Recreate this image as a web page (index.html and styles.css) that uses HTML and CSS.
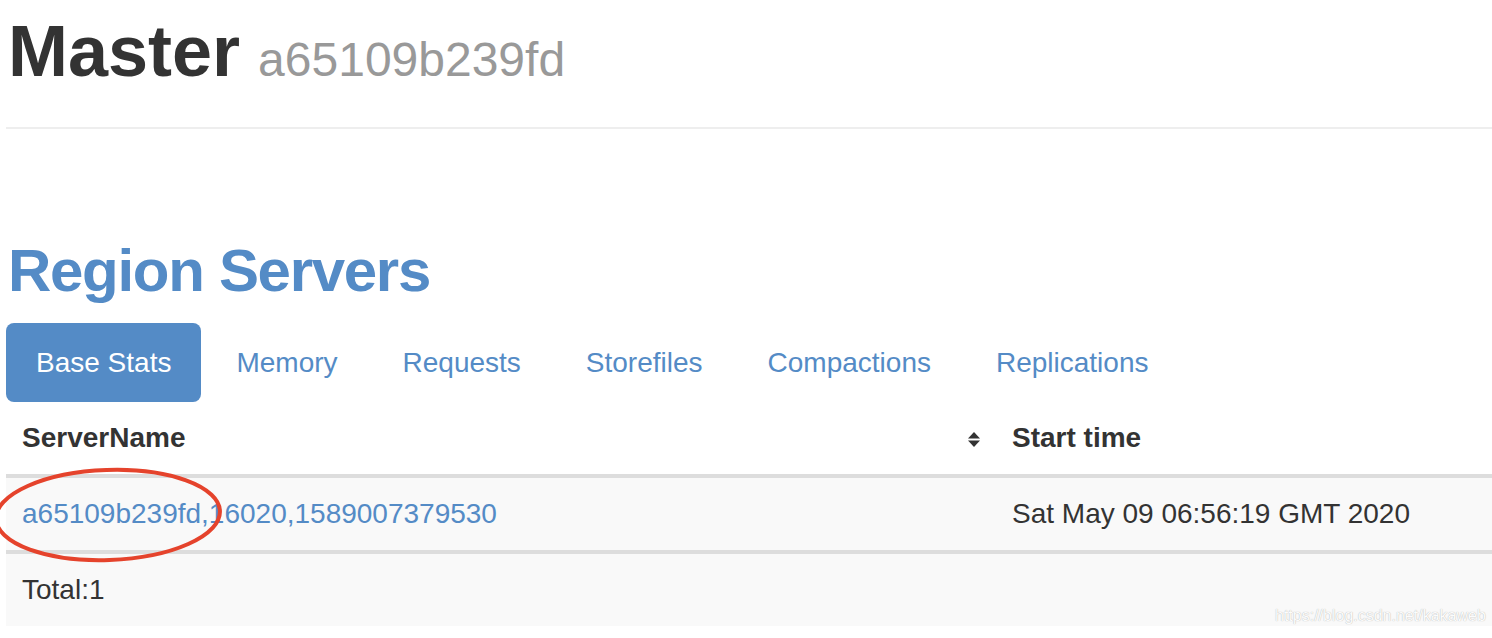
FILE: index.html
```html
<!DOCTYPE html>
<html>
<head>
<meta charset="utf-8">
<link rel="stylesheet" href="styles.css">
</head>
<body>
<div class="container">
  <div class="page-header">
    <h1>Master <small>a65109b239fd</small></h1>
  </div>
  <h2 class="section-title">Region Servers</h2>
  <ul class="nav-pills">
    <li class="active"><a>Base Stats</a></li>
    <li><a>Memory</a></li>
    <li><a>Requests</a></li>
    <li><a>Storefiles</a></li>
    <li><a>Compactions</a></li>
    <li><a>Replications</a></li>
  </ul>
  <table class="table">
    <thead>
      <tr>
        <th class="col-name"><span>ServerName</span>
          <svg class="sort-icon" width="14" height="17" viewBox="0 0 14 17"><polygon points="7,1 13,7.5 1,7.5" fill="#333"/><polygon points="1,9.5 13,9.5 7,16" fill="#333"/></svg>
        </th>
        <th>Start time</th>
      </tr>
    </thead>
    <tbody>
      <tr class="striped">
        <td class="col-name"><a class="link">a65109b239fd,16020,1589007379530</a></td>
        <td>Sat May 09 06:56:19 GMT 2020</td>
      </tr>
    </tbody>
    <tfoot>
      <tr class="striped">
        <td>Total:1</td>
        <td></td>
      </tr>
    </tfoot>
  </table>
</div>
<svg class="annotation" width="240" height="110" viewBox="0 0 240 110"><ellipse cx="115" cy="53" rx="112" ry="45" fill="none" stroke="#e5432c" stroke-width="4" transform="rotate(-2 115 53)"/></svg>
<div class="watermark">https://blog.csdn.net/kakaweb</div>
</body>
</html>
```

FILE: styles.css
```css
html, body {
  margin: 0;
  padding: 0;
  background: #fff;
  overflow: hidden;
}
body {
  font-family: "Liberation Sans", Arial, Helvetica, sans-serif;
  color: #333;
  font-size: 28px;
  width: 1492px;
  height: 638px;
  position: relative;
}
.container {
  padding-left: 6px;
}
.page-header {
  padding-top: 12px;
  padding-bottom: 28px;
  border-bottom: 2px solid #eee;
}
h1 {
  margin: 0;
  font-size: 72px;
  line-height: 79px;
  font-weight: bold;
  color: #333;
  padding-left: 2px;
}
h1 small {
  font-size: 48px;
  font-weight: normal;
  color: #999;
  margin-left: -2px;
}
.section-title {
  margin: 109px 0 19px 0;
  font-size: 60px;
  line-height: 66px;
  font-weight: bold;
  letter-spacing: -1.3px;
  color: #548bc6;
  padding-left: 2px;
}
.nav-pills {
  list-style: none;
  margin: 0;
  padding: 0;
  display: flex;
  gap: 5px;
}
.nav-pills li a {
  display: block;
  padding: 20px 30px;
  line-height: 39px;
  color: #548bc6;
  border-radius: 8px;
}
.nav-pills li.active a {
  background: #548bc6;
  color: #fff;
}
.table {
  margin-top: 0;
  width: 1486px;
  border-collapse: collapse;
  border-spacing: 0;
}
.table th, .table td {
  text-align: left;
  padding: 16px;
  line-height: 40px;
  vertical-align: top;
}
.table th {
  font-weight: bold;
  border-bottom: 4px solid #ddd;
}
.col-name {
  width: 958px;
}
th.col-name {
  position: relative;
}
.sort-icon {
  position: absolute;
  right: 15px;
  top: 29px;
}
.striped td {
  background: #f9f9f9;
}
tfoot td {
  border-top: 4px solid #ddd;
}
.link {
  color: #548bc6;
}
.annotation {
  position: absolute;
  left: -7px;
  top: 462px;
}
.watermark {
  position: absolute;
  left: 1275px;
  top: 606px;
  font-size: 16px;
  line-height: 20px;
  color: #fcfcfc;
  text-shadow: 0 0 1px rgba(0,0,0,0.35);
}
```
